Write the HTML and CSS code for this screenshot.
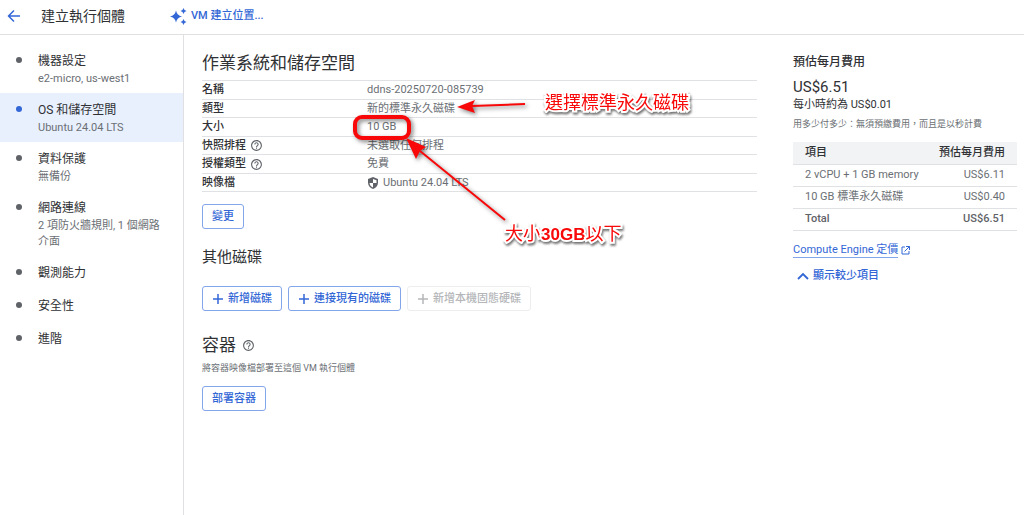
FILE: index.html
```html
<!DOCTYPE html>
<html lang="zh-Hant">
<head>
<meta charset="utf-8">
<title>建立執行個體</title>
<link rel="stylesheet" href="styles.css">
</head>
<body>
<svg class="symbols" aria-hidden="true">
  <symbol id="help" viewBox="0 0 24 24"><path fill="currentColor" d="M11 18h2v-2h-2v2zm1-16C6.48 2 2 6.48 2 12s4.480 10 10 10 10-4.480 10-10S17.520 2 12 2zm0 18c-4.410 0-8-3.590-8-8s3.590-8 8-8 8 3.590 8 8-3.590 8-8 8zm0-14c-2.210 0-4 1.790-4 4h2c0-1.100.9-2 2-2s2 .9 2 2c0 2-3 1.750-3 5h2c0-2.250 3-2.500 3-5 0-2.210-1.790-4-4-4z"/></symbol>
  <symbol id="plus" viewBox="0 0 12 12"><path d="M6 1v10M1 6h10" stroke="currentColor" stroke-width="1.500" fill="none"/></symbol>
</svg>
<header class="topbar">
  <button class="icon-button" aria-label="返回"><svg width="14" height="14" viewBox="0 0 14 14"><path d="M13 7H2M7 1.500L1.500 7L7 12.500" fill="none" stroke="currentColor" stroke-width="1.500"/></svg></button>
  <h1 class="page-title">建立執行個體</h1>
  <button class="assist"><svg width="17" height="17" viewBox="0 0 17 17" fill="currentColor"><path d="M6 2.500Q7 7.500 12 8.500Q7 9.500 6 14.500Q5 9.500 0 8.500Q5 7.500 6 2.500zM13.500 0Q14 2.500 16.500 3Q14 3.500 13.500 6Q13 3.500 10.500 3Q13 2.500 13.500 0zM13.500 11Q14 13.500 16.500 14Q14 14.500 13.500 17Q13 14.500 10.500 14Q13 13.500 13.500 11z"/></svg>VM 建立位置...</button>
</header>
<div class="layout">
  <nav class="steps">
    <a class="step" href="#machine"><span class="step-title">機器設定</span><span class="step-note">e2-micro, us-west1</span></a>
    <a class="step active" href="#storage" aria-current="page"><span class="step-title">OS 和儲存空間</span><span class="step-note">Ubuntu 24.04 LTS</span></a>
    <a class="step" href="#protection"><span class="step-title">資料保護</span><span class="step-note">無備份</span></a>
    <a class="step" href="#network"><span class="step-title">網路連線</span><span class="step-note">2 項防火牆規則, 1 個網路介面</span></a>
    <a class="step" href="#observability"><span class="step-title">觀測能力</span></a>
    <a class="step" href="#security"><span class="step-title">安全性</span></a>
    <a class="step" href="#advanced"><span class="step-title">進階</span></a>
  </nav>
  <main class="content">
    <section id="storage">
      <h2 class="heading">作業系統和儲存空間</h2>
      <table class="summary">
        <tbody>
          <tr><th scope="row">名稱</th><td>ddns-20250720-085739</td></tr>
          <tr><th scope="row">類型</th><td>新的標準永久磁碟</td></tr>
          <tr><th scope="row">大小</th><td>10 GB</td></tr>
          <tr><th scope="row"><span class="with-icon">快照排程<svg class="help"><use href="#help"/></svg></span></th><td>未選取任何排程</td></tr>
          <tr><th scope="row"><span class="with-icon">授權類型<svg class="help"><use href="#help"/></svg></span></th><td>免費</td></tr>
          <tr><th scope="row">映像檔</th><td><span class="image-name"><svg width="12" height="12" viewBox="0 0 12 12"><path d="M6 0L11 2V5.500C11 8.500 9 11 6 12C3 11 1 8.500 1 5.500V2z" fill="#5f6368"/><path d="M6 2V6H9.500V3.300zM2.500 6H6V10.500C4 9.700 2.700 8 2.500 6z" fill="#fff"/></svg>Ubuntu 24.04 LTS</span></td></tr>
        </tbody>
      </table>
      <button class="button">變更</button>
    </section>
    <section class="disks">
      <h3 class="subheading">其他磁碟</h3>
      <div class="button-row">
        <button class="button with-plus"><svg class="plus"><use href="#plus"/></svg>新增磁碟</button>
        <button class="button with-plus"><svg class="plus"><use href="#plus"/></svg>連接現有的磁碟</button>
        <button class="button with-plus" disabled><svg class="plus"><use href="#plus"/></svg>新增本機固態硬碟</button>
      </div>
    </section>
    <section class="container-section">
      <h2 class="heading with-icon">容器<svg class="help"><use href="#help"/></svg></h2>
      <p class="hint">將容器映像檔部署至這個 VM 執行個體</p>
      <button class="button">部署容器</button>
    </section>
    <svg class="markup" width="240" height="200" viewBox="340 60 240 200" aria-hidden="true">
      <g fill="none" stroke="#f80808">
        <rect x="355" y="117" width="54" height="21" rx="7" stroke-width="4"/>
        <path d="M525 104L472 106M505 220L420 151" stroke-width="2"/>
      </g>
      <path d="M457 107L475 100L472 106L475 113zM406 138L426 147L420 151L416 159z" fill="#f80808"/>
    </svg>
    <span class="callout callout-type">選擇標準永久磁碟</span>
    <span class="callout callout-size">大小<b>30GB</b>以下</span>
  </main>
  <aside class="cost">
    <h2 class="cost-title">預估每月費用</h2>
    <p class="price">US$6.51</p>
    <p class="hourly">每小時約為 US$0.01</p>
    <p class="hint">用多少付多少：無須預繳費用，而且是以秒計費</p>
    <table class="cost-table">
      <thead><tr><th scope="col">項目</th><th scope="col">預估每月費用</th></tr></thead>
      <tbody>
        <tr><td>2 vCPU + 1 GB memory</td><td>US$6.11</td></tr>
        <tr><td>10 GB 標準永久磁碟</td><td>US$0.40</td></tr>
      </tbody>
      <tfoot><tr><th scope="row">Total</th><td>US$6.51</td></tr></tfoot>
    </table>
    <a class="pricing" href="#pricing"><span class="pricing-text">Compute Engine 定價</span><svg width="9" height="9" viewBox="0 0 9 9"><path d="M4 1H1V8H8V5M5 .5H8.500V4M8.500 .5L3.500 5.500" fill="none" stroke="currentColor"/></svg></a>
    <button class="toggle"><svg width="12" height="8" viewBox="0 0 12 8"><path d="M1 7L6 2L11 7" fill="none" stroke="currentColor" stroke-width="1.800"/></svg>顯示較少項目</button>
  </aside>
</div>
</body>
</html>
```
FILE: styles.css
```css
* { box-sizing: border-box; }

body {
  margin: 0;
  min-height: 100vh;
  display: flex;
  flex-direction: column;
  background: #fff;
  color: #303134;
  font: 11px/16px Roboto, "Noto Sans CJK TC", sans-serif;
}

h1, h2, h3, p { margin: 0; font-weight: 400; }
svg { flex: none; }
.symbols { position: absolute; width: 0; height: 0; }

button {
  font: inherit;
  font-weight: 500;
  color: #3367d6;
  background: none;
  border: 0;
  padding: 0;
  cursor: pointer;
}

.topbar {
  display: flex;
  align-items: center;
  height: 35px;
  padding: 0 7px 2px;
  border-bottom: 1px solid #e0e0e2;
}
.icon-button { display: flex; }
.page-title { margin-left: 20px; font-size: 14px; line-height: 20px; }
.assist { display: flex; align-items: center; gap: 4px; margin-left: 45px; }

.layout { display: flex; flex: 1; }

.steps {
  flex: none;
  width: 184px;
  padding-top: 9px;
  border-right: 1px solid #e0e0e2;
}
.step {
  position: relative;
  display: flex;
  flex-direction: column;
  gap: 1px;
  padding: 8px 20px 6px 38px;
  color: inherit;
  text-decoration: none;
}
.step:nth-child(n+5) { padding-bottom: 7px; }
.step::before {
  content: "";
  position: absolute;
  left: 16px;
  top: 13px;
  width: 6px;
  height: 6px;
  border-radius: 50%;
  background: #5f6368;
}
.step.active { background: #e8f0fe; }
.step.active::before { background: #3367d6; }
.step-title { font-size: 12px; line-height: 18px; }
.step-note { color: #6b6f74; }

.content {
  position: relative;
  flex: 1;
  min-width: 0;
  padding: 16px 36px 16px 18px;
}
.heading { font-size: 17px; line-height: 24px; }
.subheading { font-size: 15px; line-height: 22px; }
.with-icon { display: flex; align-items: center; gap: 4px; }
.help { width: 13px; height: 13px; color: #5f6368; }

.summary {
  width: 100%;
  height: 112px;
  margin: 5px 0 12px;
  border-collapse: collapse;
  border-top: 1px solid #dfe1e4;
}
.summary tr { border-bottom: 1px solid #dfe1e4; }
.summary th, .summary td { padding: 1px 0 0; line-height: 16px; text-align: left; }
.summary th { width: 165px; font-weight: 500; }
.summary td { color: #6b6f74; }
.image-name { display: flex; align-items: center; gap: 4px; }

.button {
  height: 25px;
  padding: 0 9px;
  border: 1px solid #83a5ea;
  border-radius: 3px;
}
.button-row { display: flex; gap: 6px; }
.with-plus { display: flex; align-items: center; gap: 4px; }
.plus { width: 12px; height: 12px; }
.button:disabled { color: #b4b6b9; border-color: #ededee; cursor: default; }
.disks { margin-top: 17px; }
.disks .button-row { margin-top: 18px; }
.container-section { margin-top: 22px; }
.container-section .with-icon { gap: 6px; }
.hint { color: #6b6f74; font-size: 9px; line-height: 14px; }
.container-section .hint { margin: 4px 0 11px; }

.markup {
  position: absolute;
  left: 156px;
  top: 25px;
  filter: drop-shadow(2px 2px 2px rgb(0 0 0 / 50%));
}
.callout {
  position: absolute;
  color: #f80808;
  font: 18px/24px "Liberation Sans", "Noto Sans CJK TC", sans-serif;
  white-space: nowrap;
  -webkit-text-stroke: 4px #fff;
  paint-order: stroke fill;
  filter: drop-shadow(1px 2px 1px rgb(0 0 0 / 55%));
}
.callout b { font-size: 17px; }
.callout-type { left: 361px; top: 56px; }
.callout-size { left: 321px; top: 187px; }

.cost { flex: none; width: 231px; padding: 18px 7px 16px 0; }
.cost-title { font-size: 12px; line-height: 18px; font-weight: 500; }
.price { margin-top: 6px; font-size: 15px; line-height: 20px; }
.cost .hint { margin: 4px 0 11px; }
.cost-table { width: 100%; border-collapse: collapse; white-space: nowrap; }
.cost-table tr { border-bottom: 1px solid #dfe1e4; }
.cost-table th, .cost-table td { height: 22px; padding: 0; text-align: left; }
.cost-table th:first-child, .cost-table td:first-child { padding-left: 12px; }
.cost-table th:last-child, .cost-table td:last-child { padding-right: 12px; text-align: right; }
.cost-table td { color: #6b6f74; }
.cost-table thead { background: #f1f3f4; }
.cost-table th { font-weight: 500; }
.cost-table tfoot th, .cost-table tfoot td { font-weight: 500; color: #5f6368; }
.pricing {
  display: flex;
  align-items: center;
  gap: 3px;
  margin-top: 12px;
  color: #3367d6;
  text-decoration: none;
}
.pricing-text { line-height: 14px; border-bottom: 1px solid #83a5ea; }
.toggle { display: flex; align-items: center; gap: 4px; margin: 10px 0 0 4px; }
```
